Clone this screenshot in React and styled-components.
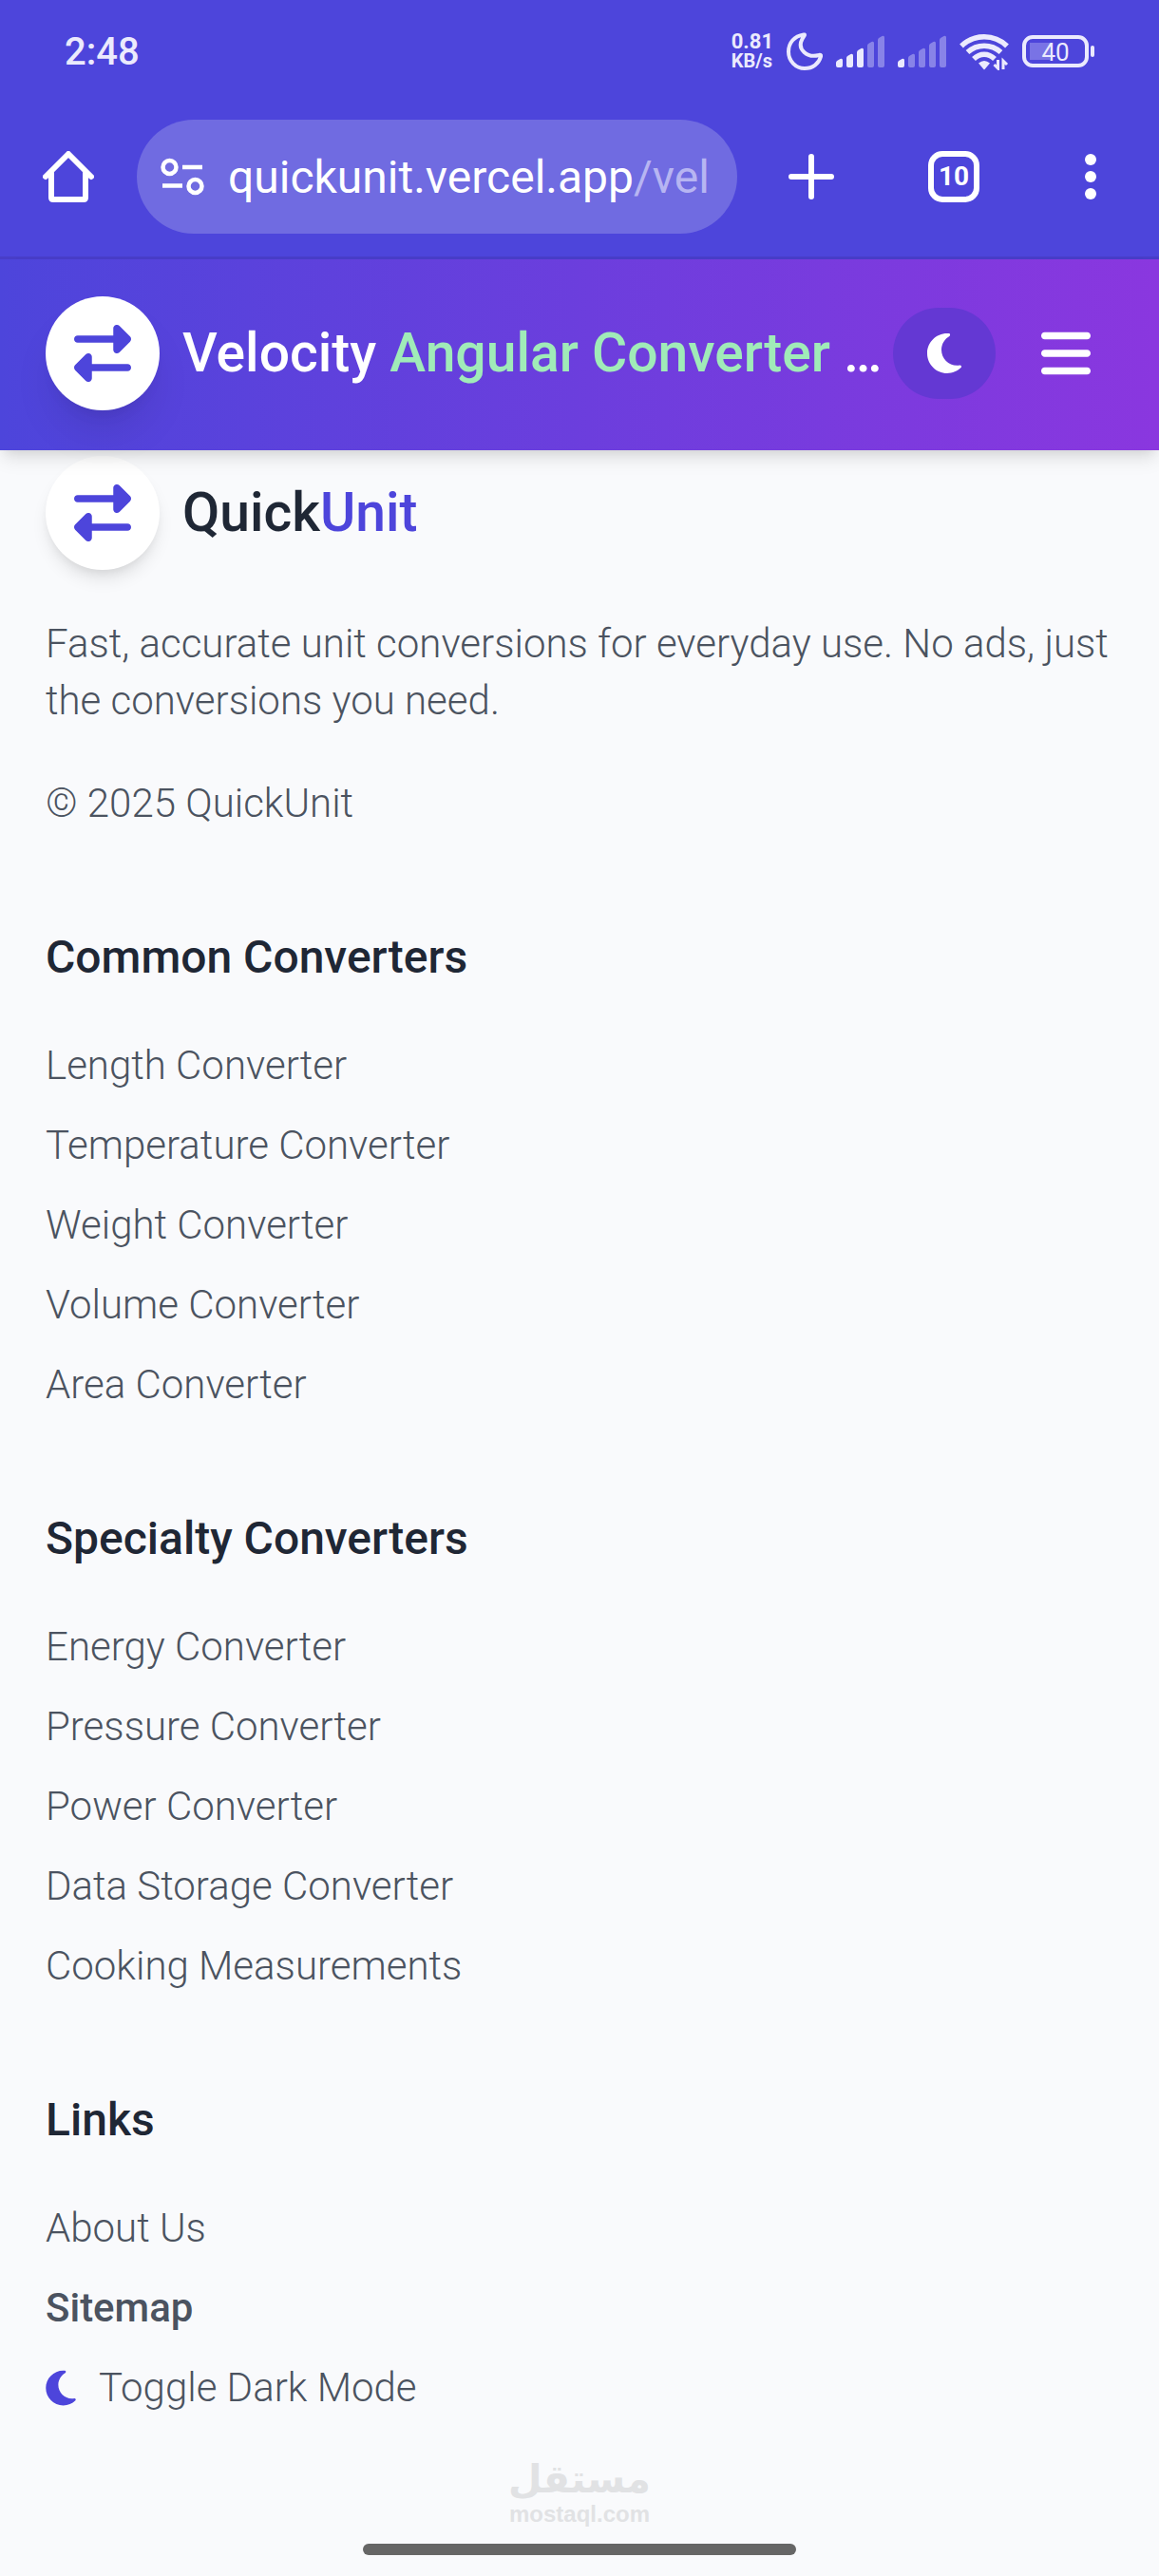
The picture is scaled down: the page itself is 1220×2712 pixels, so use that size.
import React, { useState } from 'react';
import styled, { createGlobalStyle } from 'styled-components';
import { FaBars, FaMoon, FaRightLeft } from 'react-icons/fa6';

const GlobalStyle = createGlobalStyle`
  * {
    box-sizing: border-box;
  }
  body {
    margin: 0;
    background: #f9fafc;
    font-family: Roboto, "Open Sans", sans-serif;
  }
  button {
    padding: 0;
    border: 0;
    background: none;
    color: inherit;
    font: inherit;
    cursor: pointer;
  }
  svg {
    display: block;
    flex-shrink: 0;
  }
`

const Page = styled.div`
  display: flex;
  flex-direction: column;
  min-height: 100vh;
`

const BrowserChrome = styled.div`
  background: #4d45db;
  color: #fff;
  border-bottom: 3px solid #483dc8;
`

const StatusBar = styled.div`
  display: flex;
  align-items: center;
  justify-content: space-between;
  height: 108px;
  padding: 0 68px;
  color: #ebeafd;
`

const Clock = styled.time`
  font-size: 40px;
  font-weight: 500;
`

const StatusIcons = styled.div`
  display: flex;
  align-items: center;
  gap: 14px;
`

const NetSpeed = styled.div`
  display: flex;
  flex-direction: column;
  font-size: 22px;
  font-weight: 700;
  line-height: 20px;
`

const NetUnit = styled.span`
  font-size: 20px;
`

const Battery = styled.div`
  display: flex;
  align-items: center;
  gap: 2px;
  &::after {
    content: '';
    width: 4px;
    height: 12px;
    border-radius: 2px;
    background: #ebeafd;
  }
`

const BatteryBody = styled.div`
  width: 70px;
  height: 34px;
  border: 4px solid #ebeafd;
  border-radius: 11px;
  background: linear-gradient(#7973e5, #7973e5) 4px 4px / 21px 18px no-repeat;
  font-size: 26px;
  line-height: 28px;
  text-align: center;
`

const Toolbar = styled.div`
  display: flex;
  align-items: center;
  height: 162px;
  padding: 0 36px 6px;
`

const ToolButton = styled.button`
  display: flex;
  align-items: center;
  justify-content: center;
  flex-shrink: 0;
  width: 72px;
  height: 72px;
`

const TabButton = styled(ToolButton)`
  margin-left: 6px;
`

const AddressBar = styled.button`
  display: flex;
  align-items: center;
  gap: 24px;
  flex: 1;
  min-width: 0;
  height: 120px;
  margin: 0 42px 0 36px;
  padding: 0 24px;
  border-radius: 60px;
  background: #706be1;
  overflow: hidden;
`

const Url = styled.span`
  font-size: 48px;
  white-space: nowrap;
  overflow: hidden;
`

const UrlPath = styled.span`
  color: #b7b5f2;
`

const ToolActions = styled.div`
  display: flex;
  justify-content: space-between;
  width: 366px;
`

const TabCount = styled.span`
  width: 54px;
  height: 54px;
  border: 6px solid #fff;
  border-radius: 15px;
  font-size: 28px;
  font-weight: 700;
  line-height: 42px;
  text-align: center;
`

const Header = styled.header`
  position: sticky;
  top: 0;
  z-index: 10;
  display: flex;
  align-items: center;
  padding: 39px 48px 42px;
  background: linear-gradient(to right, #4d45db, #8a37df);
  color: #fff;
  box-shadow: 0 12px 18px -3px rgba(0, 0, 0, 0.1), 0 6px 12px -6px rgba(0, 0, 0, 0.1);
`

const Logo = styled.a`
  display: flex;
  align-items: center;
  gap: 24px;
  min-width: 0;
  color: inherit;
  text-decoration: none;
`

const LogoMark = styled.span`
  display: flex;
  align-items: center;
  justify-content: center;
  flex-shrink: 0;
  width: 120px;
  height: 120px;
  border-radius: 50%;
  background: #fff;
  color: #4d45db;
  font-size: 60px;
  box-shadow: ${props => props.$raised
    ? '0 30px 45px -9px rgba(0, 0, 0, 0.1), 0 12px 18px -12px rgba(0, 0, 0, 0.1)'
    : '0 12px 18px -3px rgba(0, 0, 0, 0.1), 0 6px 12px -6px rgba(0, 0, 0, 0.1)'};
`

const Title = styled.span`
  color: ${props => props.$dark ? '#1f2735' : '#fff'};
  font-size: 57px;
  font-weight: 500;
  line-height: 84px;
  white-space: nowrap;
`

const Accent = styled.span`
  color: ${props => props.$green ? '#a0ebb8' : '#4d45db'};
`

const HeaderActions = styled.div`
  display: flex;
  align-items: center;
  gap: 24px;
  margin-left: auto;
`

const ThemeButton = styled.button`
  display: flex;
  align-items: center;
  justify-content: center;
  width: 108px;
  height: 96px;
  border-radius: 48px;
  background: #6438d3;
  font-size: 48px;
  svg {
    width: 36px;
  }
`

const MenuButton = styled.button`
  padding: 18px 24px;
  font-size: 60px;
  svg {
    width: 52px;
  }
`

const Footer = styled.footer`
  display: flex;
  flex-direction: column;
  gap: 96px;
  padding: 6px 48px 42px;
  color: #4b5360;
  font-size: 42px;
  font-weight: 300;
  line-height: 60px;
`

const About = styled.section`
  display: flex;
  flex-direction: column;
  gap: 48px;
`

const Text = styled.p`
  margin: 0;
`

const Heading = styled.h3`
  margin: 0 0 48px;
  color: #1f2735;
  font-size: 48px;
  font-weight: 500;
  line-height: 72px;
`

const LinkList = styled.ul`
  display: flex;
  flex-direction: column;
  gap: 24px;
  margin: 0;
  padding: 0;
  list-style: none;
`

const FooterLink = styled.a`
  display: block;
  color: inherit;
  font-weight: ${props => props.$active ? 500 : 300};
  text-decoration: none;
`

const ToggleLink = styled.button`
  display: flex;
  align-items: center;
  gap: 24px;
  svg {
    width: 32px;
    color: #4d45db;
  }
`

const Watermark = styled.div`
  display: flex;
  flex-direction: column;
  align-items: center;
  color: #e1e2e4;
  font-weight: 700;
`

const WatermarkName = styled.span`
  font-family: "DejaVu Sans", sans-serif;
  font-size: 41px;
  line-height: 48px;
`

const WatermarkSite = styled.span`
  font-family: "Liberation Sans", sans-serif;
  font-size: 24px;
  line-height: 26px;
`

const HomeIndicator = styled.div`
  align-self: center;
  width: 456px;
  height: 12px;
  margin: 18px 0 22px;
  border-radius: 6px;
  background: #666;
`

const converters = [
  {
    heading: 'Common Converters',
    links: ['Length Converter', 'Temperature Converter', 'Weight Converter', 'Volume Converter', 'Area Converter'],
  },
  {
    heading: 'Specialty Converters',
    links: ['Energy Converter', 'Pressure Converter', 'Power Converter', 'Data Storage Converter', 'Cooking Measurements'],
  },
]

const SignalIcon = ({ level }) => (
  <svg width="51" height="36" viewBox="0 0 51 36" fill="#ebeafd">
    {[10, 15, 21, 28, 34].map((height, i) => (
      <path
        key={height}
        d={`M${i * 11} 33V${40 - height}q0-1.500 1.500-2.300l3-1.700q2.500-1 2.500 1.500V33q0 2-2 2h-3q-2 0-2-2z`}
        opacity={i < level ? 1 : 0.38}
      />
    ))}
  </svg>
)

const DndIcon = () => (
  <svg width="38" height="40" viewBox="0 0 38 40" fill="none" stroke="#ebeafd" strokeWidth="4" strokeLinejoin="round">
    <path d="M18 2.500C8 4 2 11 2 20.500C2 30 9.500 38 19 38C27.500 38 34 33 36 25.500C36.500 24 35.500 23.500 34 24C22 27.500 10.500 18 16.500 7C18.500 3.500 20 2.200 18 2.500Z" />
  </svg>
)

const WifiIcon = () => (
  <svg width="52" height="40" viewBox="0 0 52 40" fill="none" stroke="#ebeafd" strokeWidth="5.500">
    <path d="M2 14.500C15.500 1.500 36.500 1.500 50 14.500" />
    <path d="M8.500 21C18.500 12 33.500 12 43.500 21" />
    <path d="M15 28C21.500 21.500 30.500 21.500 37 28" />
    <path d="M20 32.500Q26 27.500 32 32.500L26.500 39Q26 39.500 25.500 39Z" fill="#ebeafd" stroke="none" />
    <path d="M40.500 29V38L36.500 34M46 39V30L50 34" strokeWidth="3" />
  </svg>
)

const HomeIcon = () => (
  <svg width="54" height="54" viewBox="0 0 54 54" fill="none" stroke="#fff" strokeWidth="6" strokeLinecap="round" strokeLinejoin="round">
    <path d="M3 27L27 3L51 27" />
    <path d="M9 23V49Q9 51 11 51H43Q45 51 45 49V23" />
  </svg>
)

const SiteInfoIcon = () => (
  <svg width="48" height="40" viewBox="0 0 48 40" fill="none" stroke="#fff" strokeWidth="4.500">
    <circle cx="10.500" cy="10" r="7" />
    <path d="M24 10H45M3 29.500H24" />
    <circle cx="37.500" cy="30" r="7" />
  </svg>
)

const PlusIcon = () => (
  <svg width="48" height="48" viewBox="0 0 48 48" fill="none" stroke="#fff" strokeWidth="6" strokeLinecap="round">
    <path d="M24 3V45M3 24H45" />
  </svg>
)

const DotsIcon = () => (
  <svg width="12" height="48" viewBox="0 0 12 48" fill="#fff">
    <circle cx="6" cy="6" r="6" />
    <circle cx="6" cy="24" r="6" />
    <circle cx="6" cy="42" r="6" />
  </svg>
)

const App = () => {

  const [dark, setDark] = useState(false)

  const toggleDark = () => setDark(!dark)

  return (
    <Page>
      <GlobalStyle />
      <BrowserChrome>
        <StatusBar>
          <Clock>2:48</Clock>
          <StatusIcons>
            <NetSpeed>0.81<NetUnit>KB/s</NetUnit></NetSpeed>
            <DndIcon />
            <SignalIcon level={3} />
            <SignalIcon level={1} />
            <WifiIcon />
            <Battery>
              <BatteryBody>40</BatteryBody>
            </Battery>
          </StatusIcons>
        </StatusBar>
        <Toolbar>
          <ToolButton aria-label="Home"><HomeIcon /></ToolButton>
          <AddressBar>
            <SiteInfoIcon />
            <Url>quickunit.vercel.app<UrlPath>/vel</UrlPath></Url>
          </AddressBar>
          <ToolActions>
            <ToolButton aria-label="New tab"><PlusIcon /></ToolButton>
            <TabButton><TabCount>10</TabCount></TabButton>
            <ToolButton aria-label="More options"><DotsIcon /></ToolButton>
          </ToolActions>
        </Toolbar>
      </BrowserChrome>

      <Header>
        <Logo href="#">
          <LogoMark $raised><FaRightLeft /></LogoMark>
          <Title>Velocity <Accent $green>Angular Converter</Accent> …</Title>
        </Logo>
        <HeaderActions>
          <ThemeButton aria-label="Toggle theme" aria-pressed={dark} onClick={toggleDark}>
            <FaMoon />
          </ThemeButton>
          <MenuButton aria-label="Menu"><FaBars /></MenuButton>
        </HeaderActions>
      </Header>

      <Footer>
        <About>
          <Logo href="#">
            <LogoMark><FaRightLeft /></LogoMark>
            <Title $dark>Quick<Accent>Unit</Accent></Title>
          </Logo>
          <Text>Fast, accurate unit conversions for everyday use. No ads, just the conversions you need.</Text>
          <Text>© 2025 QuickUnit</Text>
        </About>
        {converters.map(group => (
          <section key={group.heading}>
            <Heading>{group.heading}</Heading>
            <LinkList>
              {group.links.map(link => (
                <li key={link}><FooterLink href="#">{link}</FooterLink></li>
              ))}
            </LinkList>
          </section>
        ))}
        <section>
          <Heading>Links</Heading>
          <LinkList>
            <li><FooterLink href="#">About Us</FooterLink></li>
            <li><FooterLink href="#" $active>Sitemap</FooterLink></li>
            <li><ToggleLink onClick={toggleDark}><FaMoon />Toggle Dark Mode</ToggleLink></li>
          </LinkList>
        </section>
      </Footer>

      <Watermark>
        <WatermarkName lang="ar" dir="rtl">مستقل</WatermarkName>
        <WatermarkSite>mostaql.com</WatermarkSite>
      </Watermark>
      <HomeIndicator />
    </Page>
  )
}

export default App;
